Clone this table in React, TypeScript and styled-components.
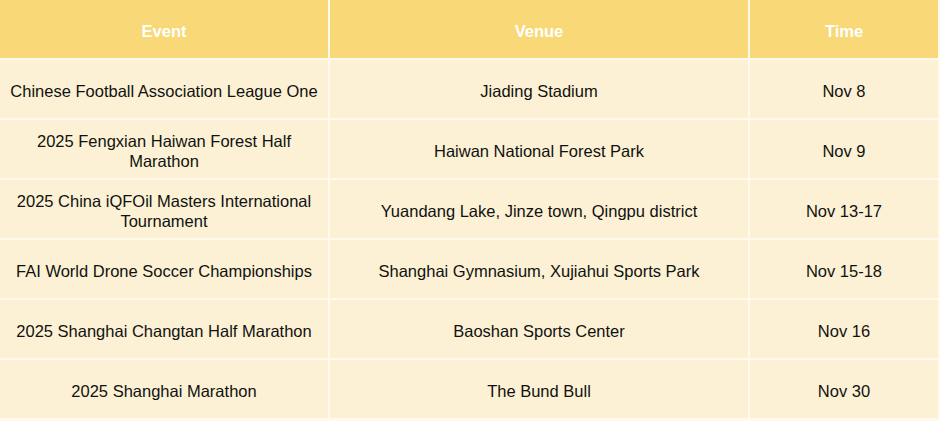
import React from "react";
import styled, { createGlobalStyle } from "styled-components";

type EventRow = {
  event: string;
  venue: string;
  time: string;
};

const rows: EventRow[] = [
  { event: "Chinese Football Association League One", venue: "Jiading Stadium", time: "Nov 8" },
  { event: "2025 Fengxian Haiwan Forest Half Marathon", venue: "Haiwan National Forest Park", time: "Nov 9" },
  {
    event: "2025 China iQFOil Masters International Tournament",
    venue: "Yuandang Lake, Jinze town, Qingpu district",
    time: "Nov 13-17",
  },
  {
    event: "FAI World Drone Soccer Championships",
    venue: "Shanghai Gymnasium, Xujiahui Sports Park",
    time: "Nov 15-18",
  },
  { event: "2025 Shanghai Changtan Half Marathon", venue: "Baoshan Sports Center", time: "Nov 16" },
  { event: "2025 Shanghai Marathon", venue: "The Bund Bull", time: "Nov 30" },
];

const App: React.FC = () => {
  return (
    <>
      <GlobalStyle />
      <Table>
        <HeadCell>Event</HeadCell>
        <HeadCell>Venue</HeadCell>
        <HeadCell>Time</HeadCell>
        {rows.map((row) => (
          <React.Fragment key={row.event}>
            <Cell>{row.event}</Cell>
            <Cell>{row.venue}</Cell>
            <Cell>{row.time}</Cell>
          </React.Fragment>
        ))}
      </Table>
    </>
  );
};

export default App;

// Styled Components
const GlobalStyle = createGlobalStyle`
  html, body {
    margin: 0;
    padding: 0;
    background: #ffffff;
  }
  body {
    font-family: "Liberation Sans", Arial, sans-serif;
  }
`;

const Table = styled.div`
  display: grid;
  grid-template-columns: 328px 418px 188px;
  grid-auto-rows: 58px;
  gap: 2px;
  width: 940px;
  box-sizing: border-box;
  padding: 0 2px 3px 0;
  background: #fffaec;
`;

const HeadCell = styled.div`
  display: flex;
  align-items: center;
  justify-content: center;
  background: #f8d877;
  color: #ffffff;
  font-weight: bold;
  font-size: 16.5px;
  padding-top: 4px;
`;

const Cell = styled.div`
  display: flex;
  align-items: center;
  justify-content: center;
  text-align: center;
  padding: 4px 8px 0;
  background: #fcf1d4;
  color: #111111;
  font-size: 16.5px;
  line-height: 20px;
`;
